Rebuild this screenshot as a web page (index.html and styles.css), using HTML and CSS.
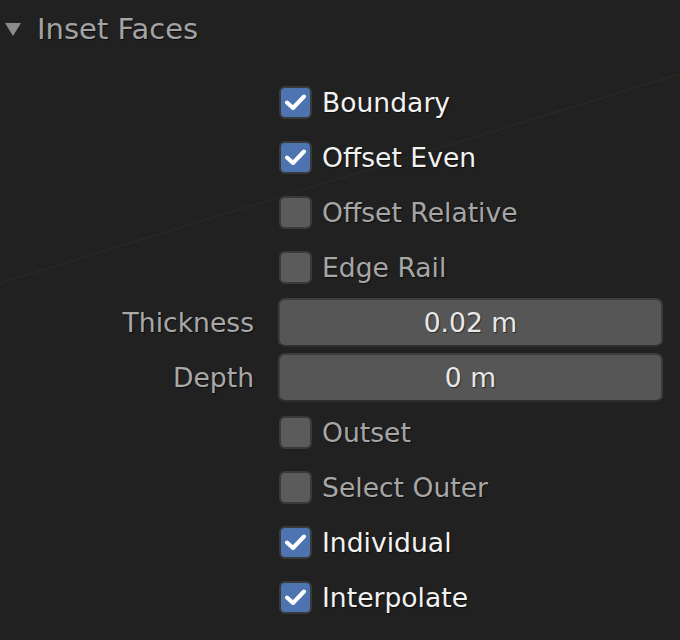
FILE: index.html
```html
<!DOCTYPE html>
<html>
<head>
<meta charset="utf-8">
<link rel="stylesheet" href="styles.css">
</head>
<body>
<svg class="gridline" width="680" height="640" viewBox="0 0 680 640"><line x1="0" y1="283" x2="680" y2="74" stroke="#282a22" stroke-width="1.5"/></svg>
<div class="panel">
  <div class="header">
    <svg class="tri" width="16" height="14" viewBox="0 0 16 14"><polygon points="0,1 16,1 8,14" fill="#8c8c8c"/></svg>
    <span class="title">Inset Faces</span>
  </div>
  <div class="props">
    <div class="label"></div>
    <div class="check on"><span class="box"><svg width="21" height="17" viewBox="0 0 21 17"><polyline points="2,8.5 8,14 19,2.5" fill="none" stroke="#fff" stroke-width="4" stroke-linecap="round" stroke-linejoin="round"/></svg></span><span class="text">Boundary</span></div>

    <div class="label"></div>
    <div class="check on"><span class="box"><svg width="21" height="17" viewBox="0 0 21 17"><polyline points="2,8.5 8,14 19,2.5" fill="none" stroke="#fff" stroke-width="4" stroke-linecap="round" stroke-linejoin="round"/></svg></span><span class="text">Offset Even</span></div>

    <div class="label"></div>
    <div class="check"><span class="box"></span><span class="text">Offset Relative</span></div>

    <div class="label"></div>
    <div class="check"><span class="box"></span><span class="text">Edge Rail</span></div>

    <div class="label">Thickness</div>
    <div class="field"><span>0.02 m</span></div>

    <div class="label">Depth</div>
    <div class="field"><span>0 m</span></div>

    <div class="label"></div>
    <div class="check"><span class="box"></span><span class="text">Outset</span></div>

    <div class="label"></div>
    <div class="check"><span class="box"></span><span class="text">Select Outer</span></div>

    <div class="label"></div>
    <div class="check on"><span class="box"><svg width="21" height="17" viewBox="0 0 21 17"><polyline points="2,8.5 8,14 19,2.5" fill="none" stroke="#fff" stroke-width="4" stroke-linecap="round" stroke-linejoin="round"/></svg></span><span class="text">Individual</span></div>

    <div class="label"></div>
    <div class="check on"><span class="box"><svg width="21" height="17" viewBox="0 0 21 17"><polyline points="2,8.5 8,14 19,2.5" fill="none" stroke="#fff" stroke-width="4" stroke-linecap="round" stroke-linejoin="round"/></svg></span><span class="text">Interpolate</span></div>
  </div>
</div>
</body>
</html>
```
FILE: styles.css
```css
html, body {
  margin: 0;
  padding: 0;
  background: #212121;
  width: 680px;
  height: 640px;
  overflow: hidden;
}
body {
  position: relative;
  font-family: "DejaVu Sans", "Liberation Sans", sans-serif;
  font-size: 26.6px;
  color: #e6e6e6;
}
.gridline {
  position: absolute;
  left: 0;
  top: 0;
  z-index: 0;
}
.panel {
  position: relative;
  z-index: 1;
}
.header {
  height: 58px;
  display: flex;
  align-items: center;
  padding-left: 5px;
}
.tri {
  margin-right: 16px;
  margin-top: -1px;
}
.title {
  font-size: 29px;
  color: #a3a3a3;
  text-shadow: 1px 1px 1px rgba(0,0,0,0.6);
}
.props {
  display: grid;
  grid-template-columns: 254px 385px;
  grid-auto-rows: 55px;
  column-gap: 24px;
  margin-top: 17px;
}
.label {
  display: flex;
  align-items: center;
  justify-content: flex-end;
  color: #a8a8a8;
  text-shadow: 1px 1px 1px rgba(0,0,0,0.6);
}
.check {
  display: flex;
  align-items: center;
  gap: 10px;
  padding-left: 1px;
}
.box {
  width: 29px;
  height: 29px;
  border: 2px solid #3a3a3a;
  border-radius: 6px;
  background: #5b5b5b;
  display: flex;
  align-items: center;
  justify-content: center;
  flex: none;
}
.check.on .box {
  background: #4d74b1;
}
.check .text {
  color: #a6a6a6;
  text-shadow: 1px 1px 1px rgba(0,0,0,0.6);
}
.check.on .text {
  color: #f2f2f2;
}
.field {
  align-self: center;
  height: 45px;
  border: 2px solid #3c3c3c;
  border-bottom-color: #2e2e2e;
  border-radius: 7px;
  background: #565656;
  display: flex;
  align-items: center;
  justify-content: center;
  color: #e8e8e8;
  text-shadow: 1px 1px 1px rgba(0,0,0,0.5);
}
```
